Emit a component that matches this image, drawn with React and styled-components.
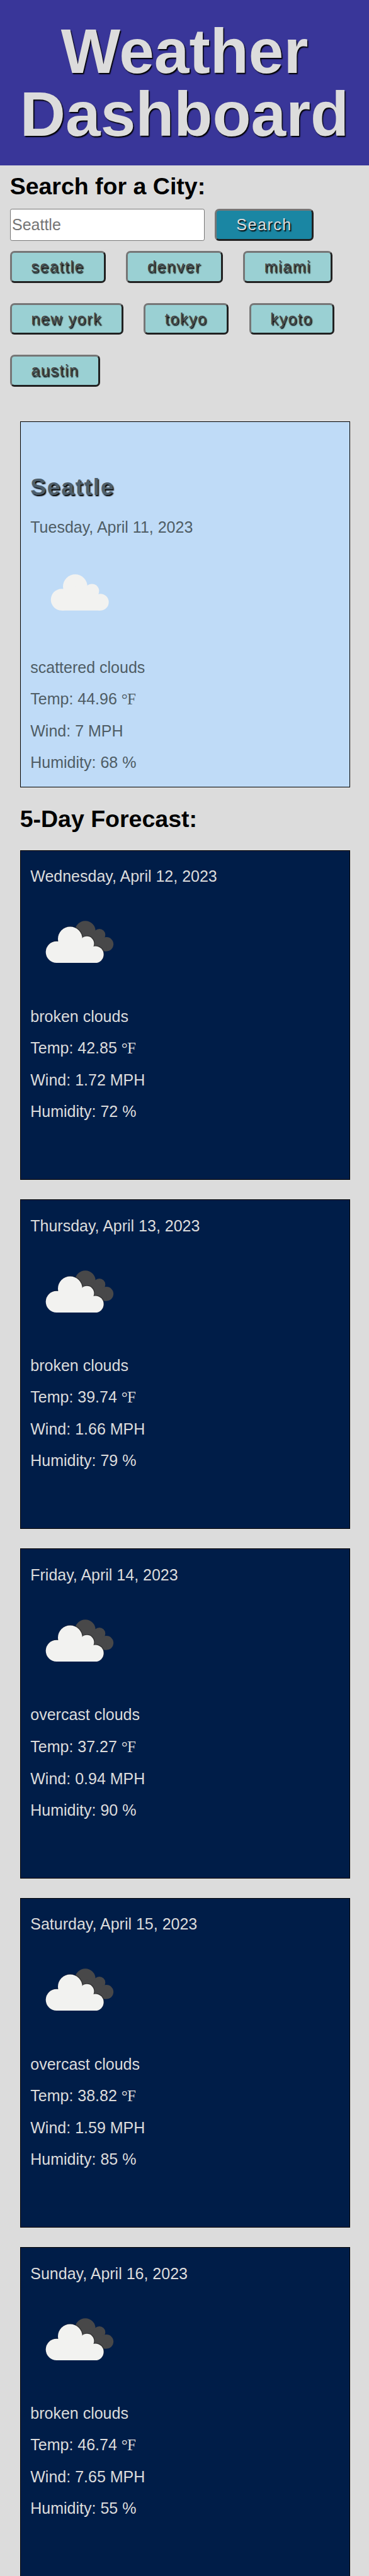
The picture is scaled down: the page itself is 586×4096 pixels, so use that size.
import React from "react";
import styled, { createGlobalStyle, css } from "styled-components";

// Design units to pixels: u() for widths and type, v() for vertical measures.
const u = (n) => `${(n * 0.78133).toFixed(3)}px`;
const v = (n) => `${(n * 0.78198).toFixed(3)}px`;

const GlobalStyle = createGlobalStyle`
  * { box-sizing: border-box; margin: 0; padding: 0; }
  body {
    background: #dcdcdc;
    font-family: "Liberation Sans", Arial, Helvetica, sans-serif;
    font-size: ${u(32)};
    color: #000;
  }
`;

const textShadow = `${u(2)} ${u(2)} ${u(2)} #000`;

const Page = styled.div`
  display: flex;
  flex-direction: column;
  height: 4096px;
  overflow: hidden;
`;

const Header = styled.header`
  background: #393699;
  height: ${v(336)};
  padding: ${v(40)} 0;
  text-align: center;
  flex: none;
`;

const Title = styled.h1`
  font-size: ${u(128)};
  line-height: ${v(128)};
  color: #dcdcdc;
  text-shadow: ${textShadow};
`;

const SearchPanel = styled.section`
  flex: none;
  height: ${v(521.3)};
  padding: ${v(16)} ${u(20)} 0;
`;

const Heading = styled.h2`
  font-size: ${u(48)};
  line-height: ${v(55)};
`;

const SearchForm = styled.form`
  display: flex;
  gap: ${u(21)};
  margin-top: ${v(18)};
`;

const CityInput = styled.input`
  width: ${u(396)};
  height: ${v(65)};
  padding: 0 ${u(3)};
  border: 1px solid #767676;
  border-radius: ${u(4)};
  background: #fff;
  font: inherit;
  &::placeholder { color: #757575; opacity: 1; }
`;

const Button = styled.button`
  height: ${v(65)};
  padding: 0 ${u(39.4)};
  border: 3px solid;
  border-color: #767676 #212121 #212121 #767676;
  border-radius: ${u(9)};
  font: inherit;
  letter-spacing: ${u(2)};
  text-shadow: ${textShadow};
  ${({ $primary }) =>
    $primary
      ? css`background: #1a86a3; color: #dcdcdc;`
      : css`background: #9ad0d3; color: #444;`}
`;

const History = styled.div`
  display: flex;
  flex-wrap: wrap;
  column-gap: ${u(41.4)};
  row-gap: ${v(40.7)};
  margin-top: ${v(20.3)};
`;

const Results = styled.main`
  flex: none;
  width: ${u(671)};
  margin-left: ${u(40.5)};
`;

const Card = styled.article`
  border: 1px solid #000;
  padding: 0 ${u(20)};
  ${({ $today }) =>
    $today
      ? css`height: ${v(744.4)}; padding-top: ${v(105)}; background: #bfdbf7; color: #4f5d65;`
      : css`height: ${v(670.4)}; padding-top: ${v(34)}; background: #001d48; color: #dcdcdc; margin-bottom: ${v(39.8)};`}
`;

const CityName = styled.h2`
  font-size: ${u(48)};
  line-height: ${v(56)};
  margin-bottom: ${v(34.3)};
  letter-spacing: ${u(2)};
  color: #4d5e6b;
  text-shadow: ${textShadow};
`;

const Line = styled.p`
  line-height: ${v(36)};
  margin-bottom: ${v(28)};
`;

const Degree = styled.span`
  font-family: "Liberation Serif", "Times New Roman", serif;
  letter-spacing: ${u(-1)};
`;

const Icon = styled.svg`
  display: block;
  width: ${u(200)};
  height: ${v(200)};
  margin-bottom: ${v(20.5)};
`;

const FrontCloud = styled.g`
  filter: drop-shadow(1px -1px 1px rgba(0, 0, 0, 0.45));
`;

const ForecastHeading = styled(Heading)`
  margin: ${v(36)} 0;
`;

function Cloud({ x, y, scale = 1, fill }) {
  return (
    <g transform={`translate(${x} ${y}) scale(${scale})`} fill={fill}>
      <circle cx="22" cy="51.7" r="22" />
      <circle cx="49.5" cy="25" r="24.8" />
      <circle cx="83.6" cy="34.2" r="14.5" />
      <circle cx="100.7" cy="56.7" r="17" />
      <path d="M22 51L49.5 25L83.6 34L100.7 56.7V73.7H22Z" />
    </g>
  );
}

function WeatherIcon({ scattered }) {
  if (scattered)
    return (
      <Icon viewBox="0 0 200 200" aria-hidden="true">
        <Cloud x={41.9} y={50} fill="#f2f2f0" />
      </Icon>
    );
  return (
    <Icon viewBox="0 0 200 200" aria-hidden="true">
      <Cloud x={70.3} y={44.8} scale={0.84} fill="#484849" />
      <FrontCloud>
        <Cloud x={31.6} y={56.8} fill="#f2f2f0" />
      </FrontCloud>
    </Icon>
  );
}

const cities = ["seattle", "denver", "miami", "new york", "tokyo", "kyoto", "austin"];

const today = ["Tuesday, April 11, 2023", "scattered clouds", "44.96", "7", "68"];

const forecast = [
  ["Wednesday, April 12, 2023", "broken clouds", "42.85", "1.72", "72"],
  ["Thursday, April 13, 2023", "broken clouds", "39.74", "1.66", "79"],
  ["Friday, April 14, 2023", "overcast clouds", "37.27", "0.94", "90"],
  ["Saturday, April 15, 2023", "overcast clouds", "38.82", "1.59", "85"],
  ["Sunday, April 16, 2023", "broken clouds", "46.74", "7.65", "55"],
];

function Conditions({ day, scattered }) {
  const [date, sky, temp, wind, humidity] = day;
  return (
    <>
      <Line>{date}</Line>
      <WeatherIcon scattered={scattered} />
      <Line>{sky}</Line>
      <Line>Temp: {temp} <Degree>°F</Degree></Line>
      <Line>Wind: {wind} MPH</Line>
      <Line>Humidity: {humidity} %</Line>
    </>
  );
}

export default function App() {
  return (
    <Page>
      <GlobalStyle />
      <Header>
        <Title>Weather<br />Dashboard</Title>
      </Header>
      <SearchPanel>
        <Heading>Search for a City:</Heading>
        <SearchForm>
          <CityInput placeholder="Seattle" />
          <Button type="button" $primary>Search</Button>
        </SearchForm>
        <History>
          {cities.map((c) => <Button key={c} type="button">{c}</Button>)}
        </History>
      </SearchPanel>
      <Results>
        <Card $today>
          <CityName>Seattle</CityName>
          <Conditions scattered day={today} />
        </Card>
        <ForecastHeading>5-Day Forecast:</ForecastHeading>
        {forecast.map((d) => (
          <Card key={d[0]}><Conditions day={d} /></Card>
        ))}
      </Results>
    </Page>
  );
}
